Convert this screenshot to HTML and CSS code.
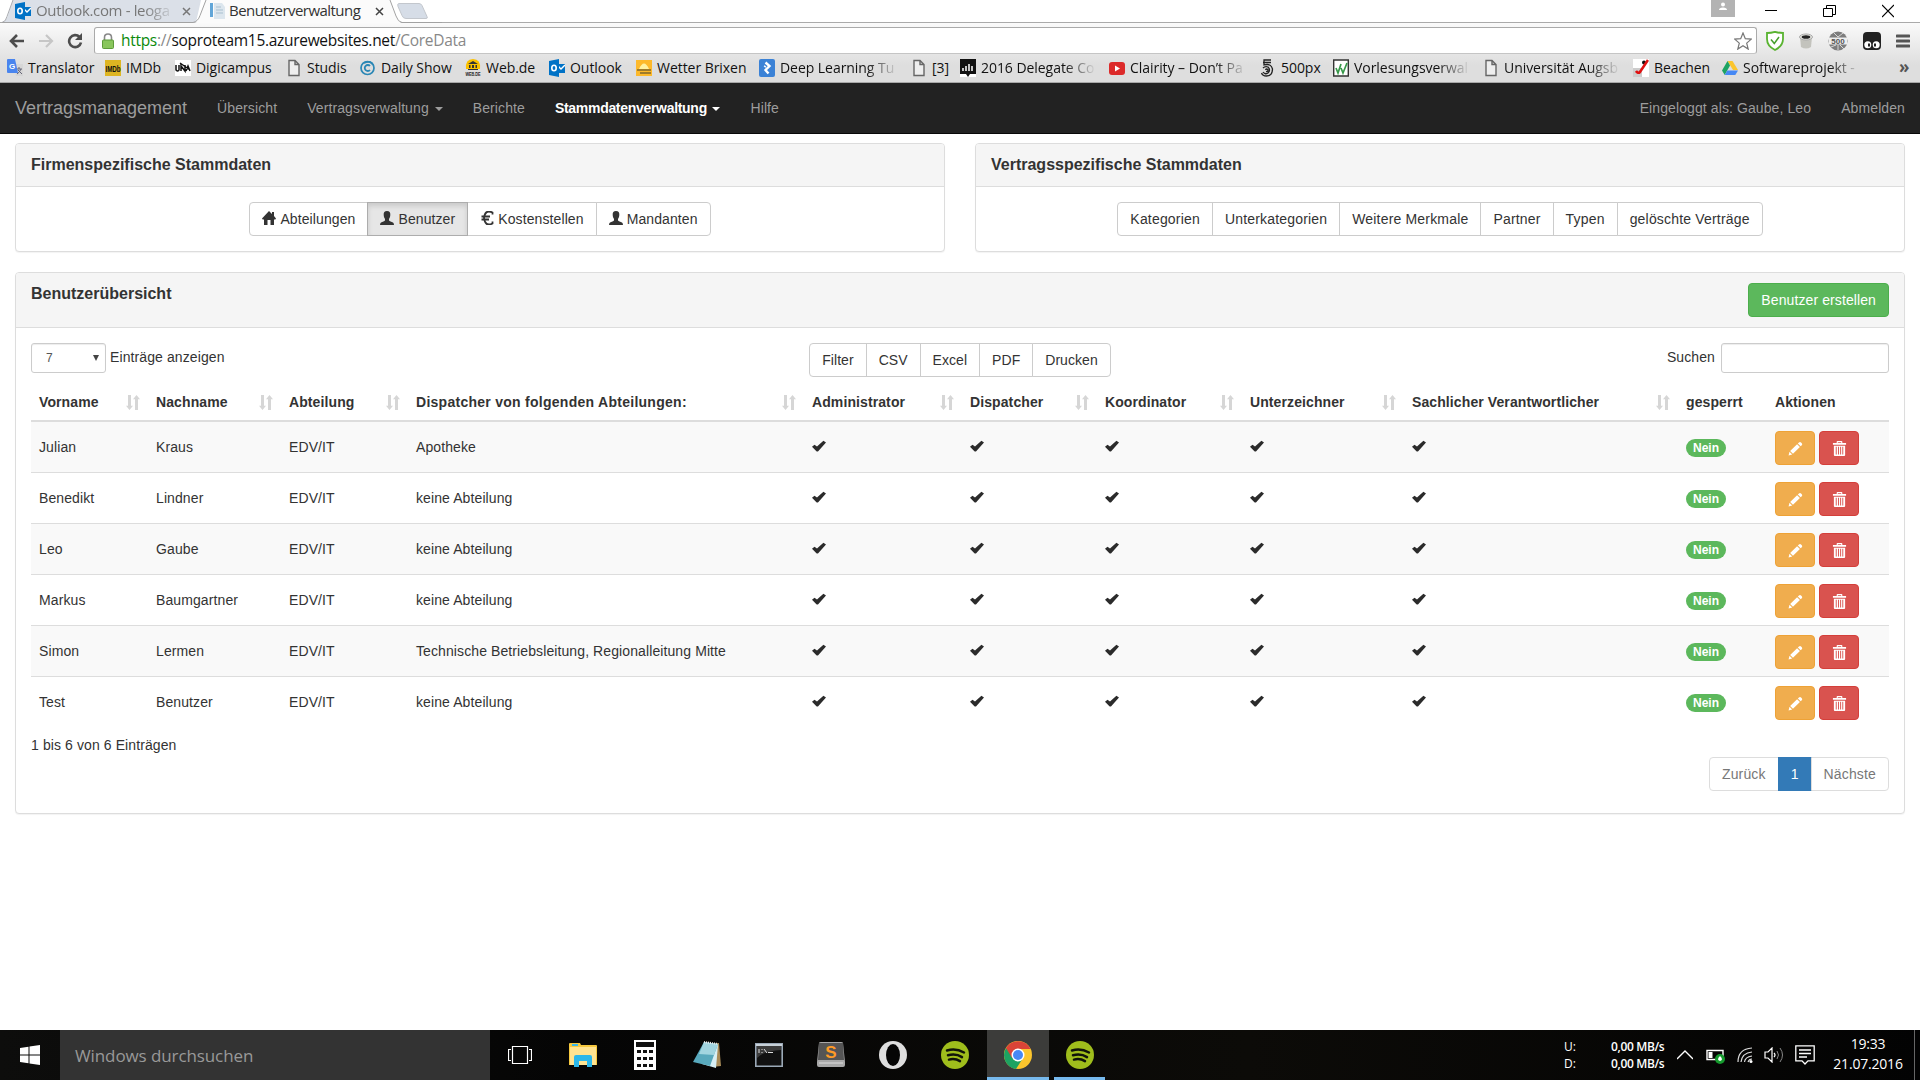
FILE: index.html
```html
<!DOCTYPE html>
<html lang="de">
<head>
<meta charset="utf-8">
<title>Benutzerverwaltung</title>
<link rel="stylesheet" href="styles.css">
</head>
<body>
<svg class="defs" width="0" height="0">
  <symbol id="check" viewBox="0 0 14 14" preserveAspectRatio="none"><path d="M0 7.800L2.500 5.600 5 7.700 11.400 0.900 14 2.900 6.200 13.200Q5.300 14 4.400 13Z"/></symbol>
  <symbol id="sort" viewBox="0 0 14 18" preserveAspectRatio="none"><path d="M2 0h3v13h2L3.500 18 0 13h2zM9 18h3V5h2L10.500 0 7 5h2z"/></symbol>
  <symbol id="pencil" viewBox="0 0 16 16"><path d="M11.700 1.500Q12.800.4 13.900 1.500L14.700 2.300Q15.700 3.300 14.700 4.400L13.500 5.500 10.500 2.600zM9.700 3.400L12.700 6.300 5.300 13.700 2.300 10.700zM1.600 11.500L4.500 14.400.6 15.500z"/></symbol>
  <symbol id="trash" viewBox="0 0 14 16"><path fill-rule="evenodd" d="M4 2V.8Q4 0 4.800 0h4.400Q10 0 10 .8V2h4v2H0V2zM5.200 2h3.600V1.200H5.200zM1 5h12v10q0 1-1 1H2q-1 0-1-1zM3 6v8.500h1V6zm2.400 0v8.500h1V6zm2.300 0v8.500h1V6zM10 6v8.500h1V6z"/></symbol>
  <symbol id="user" viewBox="0 0 14 14"><path d="M7 0C9.500 0 10.500 1.600 10.300 4 10.200 6 9.700 7 9 7.800V9.300Q9 9.900 10 10.300L13 11.500Q14 12 14 14H0Q0 12 1 11.500L4 10.300Q5 9.900 5 9.300V7.800C4.300 7 3.800 6 3.700 4 3.500 1.600 4.500 0 7 0z"/></symbol>
  <symbol id="home" viewBox="0 0 14 14"><path d="M7 0L10 3V1h2v4l2 2.600-.7.900H12V14H8.500V9h-3v5H2V8.500H.7L0 7.600z"/></symbol>
  <symbol id="page" viewBox="0 0 16 18"><path d="M3 1.500h6l4 4v11H3zM9 1.500v4h4" fill="#eee" stroke="#666" stroke-width="1.400"/></symbol>
  <symbol id="outlook" viewBox="0 0 16 18"><path d="M8 5h8v9H8z" fill="#0072c6"/><path d="M9 7l3 3 4-4" stroke="#fff" fill="none" stroke-width="1.400"/><path d="M0 2l10-2v18L0 16z" fill="#0072c6"/><ellipse cx="5" cy="9" rx="2.200" ry="2.800" fill="none" stroke="#fff" stroke-width="1.600"/></symbol>
  <symbol id="spotify" viewBox="0 0 28 28"><circle cx="14" cy="14" r="14" fill="#9fbd1c"/><path d="M6 9.500q9-2.500 17 2M7 14.300q8-2 14 1.800M8 18.600q6-1.500 11 1.500" fill="none" stroke="#10140a" stroke-width="2.500" stroke-linecap="round"/></symbol>
</svg>

<header class="browser">
  <div class="tabs">
    <svg class="tab-shapes" width="440" height="23" viewBox="0 0 440 23">
      <path d="M0 22.500q4-1 6-7L11 0h188l-5 22.500z" fill="#dbe0e8"/>
      <path d="M0 22.500q4-1 5-6L11 0" fill="none" stroke="#a9abb0"/>
      <path d="M193 23q4-2 5-7L204 0H388l6 16q2 6 6 7z" fill="#fbfbfb"/>
      <path d="M0 22.500H191q5-1 7-7L204 0M388 0l6 16q2 6 6 6.500h40" fill="none" stroke="#a2a2a2"/>
      <path d="M397 3.500h20q2 0 3 2l5 11q1 2-1 2h-20q-3 0-4-3l-4-9q-1-3 1-3z" fill="#d6dde7" stroke="#c3c7cd"/>
    </svg>
    <div class="tab tab-back"><svg class="fav"><use href="#outlook"/></svg><span class="tab-title fade">Outlook.com - leoga</span><svg class="tab-x" viewBox="0 0 9 9"><path d="M1 1l7 7M8 1L1 8"/></svg></div>
    <div class="tab tab-front"><svg class="fav" viewBox="0 0 16 18"><path d="M0 1h3v14H0z" fill="#62a6d8"/><path d="M4 1h8l3 4v12H4z" fill="#dce6ee"/><path d="M6 5h5M6 8h7M6 11h7" stroke="#a9c0d0"/></svg><span class="tab-title">Benutzerverwaltung</span><svg class="tab-x" viewBox="0 0 9 9"><path d="M1 1l7 7M8 1L1 8"/></svg></div>
    <div class="win">
      <svg width="24" height="17" viewBox="0 0 24 17"><path d="M0 0h24v17H0z" fill="#b3b3b3"/><circle cx="12" cy="4.500" r="2" fill="#fff"/><path d="M8 10q0-2.500 4-2.500t4 2.500z" fill="#fff"/></svg>
      <svg width="12" height="17" viewBox="0 0 12 17"><path d="M0 10.500h12" stroke="#000"/></svg>
      <svg width="13" height="18" viewBox="0 0 13 18"><path d="M.5 8.500h9v8h-9zM3.500 8V5.500h9v9H10" fill="none" stroke="#000"/></svg>
      <svg width="12" height="18" viewBox="0 0 12 18"><path d="M0 5l12 12M12 5L0 17" stroke="#000" stroke-width="1.200"/></svg>
    </div>
  </div>
  <div class="toolbar">
    <svg width="16" height="16" viewBox="0 0 16 16"><path d="M8 2L2 8l6 6M2 8h13" fill="none" stroke="#4d4d4d" stroke-width="2.600"/></svg>
    <svg width="16" height="16" viewBox="0 0 16 16"><path d="M8 2l6 6-6 6M14 8H1" fill="none" stroke="#c6c6c6" stroke-width="2.200"/></svg>
    <svg width="16" height="16" viewBox="0 0 16 16"><path d="M12.500 4A6 6 0 1 0 14 9.500" fill="none" stroke="#4d4d4d" stroke-width="2.600"/><path d="M15 0v7H8z" fill="#4d4d4d"/></svg>
    <div class="address">
      <svg width="12" height="16" viewBox="0 0 12 16"><path d="M2.500 8V4.500Q2.500 1 6 1t3.500 3.500V8" fill="none" stroke="#888" stroke-width="1.600"/><rect x=".5" y="7" width="11" height="8.500" rx="1" fill="#89c65c" stroke="#5d9b3a"/></svg>
      <span class="url"><i class="secure">https</i><i>://</i>soproteam15.azurewebsites.net<i>/CoreData</i></span>
      <svg width="18" height="18" viewBox="0 0 18 18"><path d="M9 1l2.300 5.700 6 .4-4.600 4 1.500 6L9 13.800 3.800 17.100l1.500-6-4.600-4 6-.4z" fill="#fff" stroke="#777" stroke-width="1.200"/></svg>
    </div>
    <div class="extensions">
      <svg width="18" height="20" viewBox="0 0 18 20"><path d="M1 2q4 0 8-1.200Q13 2 17 2v6q0 7-8 11Q1 15 1 8z" fill="#fff" stroke="#59b330" stroke-width="1.800"/><path d="M5 8.500l3.300 4L13 6" fill="none" stroke="#459f2c" stroke-width="1.500"/></svg>
      <svg width="14" height="16" viewBox="0 0 14 16"><path d="M1 4h12l-1 10q-5 3-10 0z" fill="#c3c3bd"/><ellipse cx="7" cy="4" rx="6.500" ry="3" fill="#e4e4df" stroke="#aaa"/><ellipse cx="7" cy="4" rx="4.300" ry="1.800" fill="#222"/></svg>
      <svg width="20" height="20" viewBox="0 0 20 20"><circle cx="10" cy="10" r="9.500" fill="#7d7d7d"/><path d="M5 1l5 5M15 2l-5 4M3 16l5-2M12 14l4 4M10 14v5" stroke="#d8d8d8" fill="none"/><path d="M1 6.500h18v7H1z" fill="#eee"/><text x="10" y="13" class="ext-label">500</text></svg>
      <svg width="18" height="18" viewBox="0 0 18 18"><rect width="18" height="18" rx="4" fill="#222"/><circle cx="4.800" cy="12.700" r="3.500" fill="#fff"/><circle cx="13.200" cy="12.700" r="3.500" fill="#fff"/><path d="M5 11.500h2v3H5zM11 11.500h2v3h-2z" fill="#222"/></svg>
      <svg width="14" height="14" viewBox="0 0 14 14"><path d="M1 2h12M1 7h12M1 12h12" stroke="#555" stroke-width="3" stroke-linecap="round"/></svg>
    </div>
  </div>
  <nav class="bookmarks">
    <a><svg class="fav" viewBox="0 0 16 18"><path d="M7 5h9v12H9z" fill="#d6d6d6"/><path d="M9 10h6M12 8v2M14 10q-1 3-4 5M11 11l4 4" stroke="#667" fill="none"/><path d="M0 1q0-1 1-1h7l3 14H1q-1 0-1-1z" fill="#4a85ee"/><text x="5" y="10" class="g-label">G</text></svg>Translator</a>
    <a><svg class="fav" viewBox="0 0 16 18"><path d="M0 1h16v16H0z" fill="#deb522"/><text x="8" y="13" class="imdb-label" textLength="15" lengthAdjust="spacingAndGlyphs">IMDb</text></svg>IMDb</a>
    <a><svg class="fav" viewBox="0 0 16 18"><path d="M0 1h16v16H0z" fill="#fff"/><path d="M1 6v5q2 2 3 0V6M6 12V7l4 5V6M11 12l2-5 2 5M5 4l10 7" fill="none" stroke="#111" stroke-width="1.500"/></svg>Digicampus</a>
    <a><svg class="fav"><use href="#page"/></svg>Studis</a>
    <a><svg class="fav" viewBox="0 0 16 18"><circle cx="7.500" cy="9" r="6.500" fill="none" stroke="#2b87b5" stroke-width="1.700"/><path d="M10 7a3 3 0 1 0 0 4M4 4Q11 1 13 6" fill="none" stroke="#2b87b5" stroke-width="1.800"/></svg>Daily Show</a>
    <a><svg class="fav" viewBox="0 0 16 18"><path d="M1 10Q0 0 8 0t7 10z" fill="#fcc100"/><path d="M3 5l5-3 5 3zM4 6h1.500v3H4zM7 6h2v3H7zM10.500 6H12v3h-1.500zM3 10h10v1H3z" fill="#333"/><text x="8" y="17" class="web-label" textLength="15" lengthAdjust="spacingAndGlyphs">WEB.DE</text></svg>Web.de</a>
    <a><svg class="fav"><use href="#outlook"/></svg>Outlook</a>
    <a><svg class="fav" viewBox="0 0 16 18"><path d="M0 1h16v16H0z" fill="#fdb92b"/><path d="M3 10q5-11 10 0z" fill="#fff1a0"/><path d="M1 11h14M4 14h11" stroke="#80672c" stroke-width="1.500"/></svg>Wetter Brixen</a>
    <a class="fade"><svg class="fav" viewBox="0 0 16 18"><rect width="16" height="18" rx="2" fill="#3b82d6"/><path d="M6.500 3.500l4 3.500-4 4 3 3.500M6.500 7l-1 1" fill="none" stroke="#fff" stroke-width="2.400"/></svg>Deep Learning Tu</a>
    <a><svg class="fav"><use href="#page"/></svg>[3]</a>
    <a class="fade"><svg class="fav" viewBox="0 0 16 18"><path d="M0 0h16v18H0z" fill="#fff"/><path d="M0 0h16v15h-6l-2 3-2-3H0z" fill="#111"/><path d="M3 12V9M6 12V7M9 12V5M12 12V7" stroke="#fff" stroke-width="1.500"/></svg>2016 Delegate Co</a>
    <a class="fade"><svg class="fav" viewBox="0 0 16 18"><rect y="3" width="16" height="13" rx="3" fill="#dc2a2a"/><path d="M6 6.500l5 3-5 3z" fill="#fff"/></svg>Clairity – Don’t Pa</a>
    <a><svg class="fav" viewBox="0 0 16 18"><path d="M11 1H4v5q7-2 8.500 4 0 7-6 7-4 0-5-3M3 3.500h8M3 13q2 3 5 1 3-3 0-6-3-1-5 1M5.500 11q1-2 2.500 0 0 2-2 1.500" fill="none" stroke="#222" stroke-width="1.300"/></svg>500px</a>
    <a class="fade"><svg class="fav" viewBox="0 0 16 18"><path d="M.7 1h14.600v16H.7z" fill="#fff" stroke="#333" stroke-width="1.400"/><path d="M3 9l2 5 3-9M8 9l2 5 4-10" fill="none" stroke="#38994a" stroke-width="1.700"/></svg>Vorlesungsverwal</a>
    <a class="fade"><svg class="fav"><use href="#page"/></svg>Universität Augsb</a>
    <a><svg class="fav" viewBox="0 0 16 18"><path d="M0 0h16v18H0z" fill="#fff"/><path d="M0 9h9v9H0z" fill="#ccc"/><circle cx="11" cy="3.500" r="2" fill="#111"/><path d="M15 1L7 13q-2 2-4-1" fill="none" stroke="#e01010" stroke-width="2.600"/></svg>Beachen</a>
    <a class="fade"><svg class="fav" viewBox="0 0 16 18"><path d="M5.500 2h5L16 11h-5z" fill="#fbc52d"/><path d="M5.500 2L8 6.500 2.700 16 0 11.500z" fill="#1da362"/><path d="M5.300 11.500H16L13.300 16H2.700z" fill="#4688f4"/></svg>Softwareprojekt -</a>
    <b>»</b>
  </nav>
</header>

<nav class="navbar">
  <a class="brand">Vertragsmanagement</a>
  <a>Übersicht</a>
  <a>Vertragsverwaltung <span class="caret"></span></a>
  <a>Berichte</a>
  <a class="current">Stammdatenverwaltung <span class="caret"></span></a>
  <a>Hilfe</a>
  <a class="login">Eingeloggt als: Gaube, Leo</a>
  <a>Abmelden</a>
</nav>

<main class="content">
  <div class="panel-row">
    <section class="panel">
      <h3 class="panel-heading">Firmenspezifische Stammdaten</h3>
      <div class="panel-body centered">
        <div class="btn-group">
          <a class="btn"><svg class="glyph"><use href="#home"/></svg>Abteilungen</a><a class="btn pressed"><svg class="glyph"><use href="#user"/></svg>Benutzer</a><a class="btn"><svg class="glyph" viewBox="0 0 14 14"><path d="M12.500 3.500V1.500Q5 -2 4 7q1 9 8.500 5.500V10.500M1.500 5.500H10M1.500 8.500H9" fill="none" stroke="#333" stroke-width="1.800"/></svg>Kostenstellen</a><a class="btn"><svg class="glyph"><use href="#user"/></svg>Mandanten</a>
        </div>
      </div>
    </section>
    <section class="panel">
      <h3 class="panel-heading">Vertragsspezifische Stammdaten</h3>
      <div class="panel-body centered">
        <div class="btn-group wide"><a class="btn">Kategorien</a><a class="btn">Unterkategorien</a><a class="btn">Weitere Merkmale</a><a class="btn">Partner</a><a class="btn">Typen</a><a class="btn">gelöschte Verträge</a></div>
      </div>
    </section>
  </div>

  <section class="panel overview">
    <div class="panel-heading with-action"><h3>Benutzerübersicht</h3><a class="btn success">Benutzer erstellen</a></div>
    <div class="panel-body">
      <div class="controls">
        <div class="length"><span class="select">7<span class="arrow"></span></span>Einträge anzeigen</div>
        <div class="btn-group"><a class="btn">Filter</a><a class="btn">CSV</a><a class="btn">Excel</a><a class="btn">PDF</a><a class="btn">Drucken</a></div>
        <label class="search">Suchen<input type="text"></label>
      </div>
      <table class="users">
        <colgroup><col class="c1"><col class="c2"><col class="c3"><col class="c4"><col class="c5"><col class="c6"><col class="c7"><col class="c8"><col class="c9"><col class="c10"><col class="c11"></colgroup>
        <thead><tr>
          <th><div>Vorname<svg><use href="#sort"/></svg></div></th>
          <th><div>Nachname<svg><use href="#sort"/></svg></div></th>
          <th><div>Abteilung<svg><use href="#sort"/></svg></div></th>
          <th class="departments"><div>Dispatcher von folgenden Abteilungen:<svg><use href="#sort"/></svg></div></th>
          <th><div>Administrator<svg><use href="#sort"/></svg></div></th>
          <th><div>Dispatcher<svg><use href="#sort"/></svg></div></th>
          <th><div>Koordinator<svg><use href="#sort"/></svg></div></th>
          <th><div>Unterzeichner<svg><use href="#sort"/></svg></div></th>
          <th><div>Sachlicher Verantwortlicher<svg><use href="#sort"/></svg></div></th>
          <th>gesperrt</th>
          <th>Aktionen</th>
        </tr></thead>
        <tbody>
          <tr><td>Julian</td><td>Kraus</td><td>EDV/IT</td><td>Apotheke</td><td><svg class="tick"><use href="#check"/></svg></td><td><svg class="tick"><use href="#check"/></svg></td><td><svg class="tick"><use href="#check"/></svg></td><td><svg class="tick"><use href="#check"/></svg></td><td><svg class="tick"><use href="#check"/></svg></td><td><span class="badge">Nein</span></td><td><div class="actions"><a class="btn warning"><svg><use href="#pencil"/></svg></a><a class="btn danger"><svg><use href="#trash"/></svg></a></div></td></tr>
          <tr><td>Benedikt</td><td>Lindner</td><td>EDV/IT</td><td>keine Abteilung</td><td><svg class="tick"><use href="#check"/></svg></td><td><svg class="tick"><use href="#check"/></svg></td><td><svg class="tick"><use href="#check"/></svg></td><td><svg class="tick"><use href="#check"/></svg></td><td><svg class="tick"><use href="#check"/></svg></td><td><span class="badge">Nein</span></td><td><div class="actions"><a class="btn warning"><svg><use href="#pencil"/></svg></a><a class="btn danger"><svg><use href="#trash"/></svg></a></div></td></tr>
          <tr><td>Leo</td><td>Gaube</td><td>EDV/IT</td><td>keine Abteilung</td><td><svg class="tick"><use href="#check"/></svg></td><td><svg class="tick"><use href="#check"/></svg></td><td><svg class="tick"><use href="#check"/></svg></td><td><svg class="tick"><use href="#check"/></svg></td><td><svg class="tick"><use href="#check"/></svg></td><td><span class="badge">Nein</span></td><td><div class="actions"><a class="btn warning"><svg><use href="#pencil"/></svg></a><a class="btn danger"><svg><use href="#trash"/></svg></a></div></td></tr>
          <tr><td>Markus</td><td>Baumgartner</td><td>EDV/IT</td><td>keine Abteilung</td><td><svg class="tick"><use href="#check"/></svg></td><td><svg class="tick"><use href="#check"/></svg></td><td><svg class="tick"><use href="#check"/></svg></td><td><svg class="tick"><use href="#check"/></svg></td><td><svg class="tick"><use href="#check"/></svg></td><td><span class="badge">Nein</span></td><td><div class="actions"><a class="btn warning"><svg><use href="#pencil"/></svg></a><a class="btn danger"><svg><use href="#trash"/></svg></a></div></td></tr>
          <tr><td>Simon</td><td>Lermen</td><td>EDV/IT</td><td>Technische Betriebsleitung, Regionalleitung Mitte</td><td><svg class="tick"><use href="#check"/></svg></td><td><svg class="tick"><use href="#check"/></svg></td><td><svg class="tick"><use href="#check"/></svg></td><td><svg class="tick"><use href="#check"/></svg></td><td><svg class="tick"><use href="#check"/></svg></td><td><span class="badge">Nein</span></td><td><div class="actions"><a class="btn warning"><svg><use href="#pencil"/></svg></a><a class="btn danger"><svg><use href="#trash"/></svg></a></div></td></tr>
          <tr><td>Test</td><td>Benutzer</td><td>EDV/IT</td><td>keine Abteilung</td><td><svg class="tick"><use href="#check"/></svg></td><td><svg class="tick"><use href="#check"/></svg></td><td><svg class="tick"><use href="#check"/></svg></td><td><svg class="tick"><use href="#check"/></svg></td><td><svg class="tick"><use href="#check"/></svg></td><td><span class="badge">Nein</span></td><td><div class="actions"><a class="btn warning"><svg><use href="#pencil"/></svg></a><a class="btn danger"><svg><use href="#trash"/></svg></a></div></td></tr>
        </tbody>
      </table>
      <p class="info">1 bis 6 von 6 Einträgen</p>
      <div class="pagination"><a>Zurück</a><a class="active">1</a><a>Nächste</a></div>
    </div>
  </section>
</main>

<footer class="taskbar">
  <div class="start"><svg width="20" height="20" viewBox="0 0 20 20"><path d="M0 3l8.500-1.300v7.800H0zM9.500 1.500L20 0v9.500H9.500zM0 10.500h8.500v7.800L0 17zM9.500 10.500H20V20L9.500 18.500z" fill="#fff"/></svg></div>
  <div class="task-search">Windows durchsuchen</div>
  <div class="apps">
    <span><svg width="24" height="18" viewBox="0 0 24 18"><path d="M4.500.5h15v17h-15zM3 3.500H.5v11H3M21 3.500h2.500v11H21" fill="none" stroke="#fff" stroke-width="1.200"/></svg></span>
    <span><svg width="28" height="24" viewBox="0 0 28 24"><path d="M0 1q0-1 1-1h10l1 2h15q1 0 1 1v19H0z" fill="#f5c83f"/><path d="M1 4h26v18H1z" fill="#ffe391"/><path d="M3 1h6v2H3z" fill="#3bb5e6"/><path d="M5 24V14q0-2 2-2h14q2 0 2 2v10h-5v-6h-8v6z" fill="#2bb7ea"/></svg></span>
    <span><svg width="22" height="30" viewBox="0 0 22 30"><path d="M0 0h22v30H0z" fill="#fff"/><path d="M2 2h18v5H2zM3 10h4v3H3zM9 10h4v3H9zM15 10h4v3h-4zM3 17h4v3H3zM9 17h4v3H9zM15 17h4v3h-4zM3 24h4v3H3zM9 24h4v3H9zM15 24h4v3h-4z" fill="#111"/></svg></span>
    <span><svg width="28" height="28" viewBox="0 0 28 28"><path d="M17 3l9-1 2 23-9 1z" fill="#a88b58"/><path d="M12 2l13 2-2 23-14-4z" fill="#d7eff5"/><path d="M11 1l14 2-8 22L0 21z" fill="#58a9bd"/><path d="M11 1l14 2-4 11-15-1z" fill="#a1d5e0"/><path d="M11 1l14 2" stroke="#eee" stroke-width="2" stroke-dasharray="1 1"/></svg></span>
    <span><svg width="28" height="24" viewBox="0 0 28 24"><path d="M.8.8h26.400v22.400H.8z" fill="#111" stroke="#9ba9b7" stroke-width="1.600"/><path d="M2 2h24v5Q8 8 2 15z" fill="#3b3b3b"/><path d="M1 2h26" stroke="#c7d0d8" stroke-width="2"/><path d="M4 6v4M7 6v1M7 9v1M9 6l3 4M13 9.500h5" stroke="#ddd"/></svg></span>
    <span><svg width="28" height="25" viewBox="0 0 28 25"><path d="M2 1q0-1 2-1h20q2 0 2 1l2 19v3q0 2-2 2H2q-2 0-2-2v-3z" fill="#a8a8a8"/><path d="M2 1h24l1 17H1z" fill="#555"/><path d="M2 21h24" stroke="#ddd"/><text x="14" y="16" class="sublime-label">S</text></svg></span>
    <span><svg width="28" height="28" viewBox="0 0 28 28"><ellipse cx="14" cy="14" rx="14" ry="14" fill="#dedede"/><ellipse cx="14" cy="14" rx="7" ry="11" fill="#050505"/></svg></span>
    <span><svg width="28" height="28"><use href="#spotify"/></svg></span>
    <span class="focused"><svg width="28" height="28" viewBox="0 0 28 28"><circle cx="14" cy="14" r="14" fill="#fbc52d"/><path d="M14 14L2 7a14 14 0 0 0 10 21l7-11z" fill="#1da362"/><path d="M2 7a14 14 0 0 1 24.500 1H14L8 17z" fill="#db4437"/><circle cx="14" cy="14" r="6.500" fill="#fff"/><circle cx="14" cy="14" r="5" fill="#4688f4"/></svg></span>
    <span class="running"><svg width="28" height="28"><use href="#spotify"/></svg></span>
  </div>
  <div class="tray">
    <div class="net"><span>U:</span><b>0,00 MB/s</b><span>D:</span><b>0,00 MB/s</b></div>
    <svg class="chevron" width="16" height="10" viewBox="0 0 16 10"><path d="M0 9l8-8 8 8" fill="none" stroke="#fff" stroke-width="1.300"/></svg>
    <svg width="20" height="18" viewBox="0 0 20 18"><path d="M1 4.500h16v9H1z" fill="none" stroke="#fff" stroke-width="1.400"/><path d="M2.500 6h4v6h-4z" fill="#fff"/><circle cx="14" cy="13" r="5" fill="#159a2d"/><path d="M14 10q-4 4 0 5 4-1 0-5z" fill="#fff"/></svg>
    <svg width="16" height="16" viewBox="0 0 16 16"><path d="M1 15Q1 2 15 1M4 15Q5 6 15 5M7.500 15Q8 10 15 9M11 15q1-3 4-3" fill="none" stroke="#ddd" stroke-width="1.200"/><circle cx="14" cy="14.500" r="1.500" fill="#fff"/></svg>
    <svg width="20" height="16" viewBox="0 0 20 16"><path d="M1 5h3l4-4v14l-4-4H1zM10 6q2 2 0 4" fill="none" stroke="#fff" stroke-width="1.200"/><path d="M13 4q3 4 0 8M16 1q5 7 0 14" fill="none" stroke="#888"/></svg>
    <svg width="20" height="20" viewBox="0 0 20 20"><path d="M.8.800h18.400v15H13L10 19l-3-3.200H.8zM4 5h12M4 8.500h12M4 12h8" fill="none" stroke="#fff" stroke-width="1.300"/></svg>
    <div class="clock">19:33<br>21.07.2016</div>
    <i class="peek"></i>
  </div>
</footer>
</body>
</html>
```
FILE: styles.css
```css
* { box-sizing: border-box; }
body {
  margin: 0;
  height: 1080px;
  overflow: hidden;
  display: flex;
  flex-direction: column;
  background: #fff;
  color: #333;
  font: 14px/20px "Liberation Sans", Arial, sans-serif;
  letter-spacing: 0.1px;
}
h3, p { margin: 0; }
svg { flex: none; display: block; }
.defs { position: absolute; }

/* browser window */
.browser { height: 83px; flex: none; font-family: "Open Sans", "Noto Sans", sans-serif; color: #111; border-bottom: 1px solid #a8a8a8; background: linear-gradient(#fff 22px, #fafafa 23px, #dedede 65px); }
.tabs { height: 23px; display: flex; position: relative; border-bottom: 1px solid #aaa; background: #fff; }
.tab-shapes { position: absolute; left: 2px; top: 0; }
.tab { position: relative; display: flex; align-items: center; height: 22px; font-size: 15px; letter-spacing: -0.55px; white-space: nowrap; }
.tab-back { width: 200px; padding-left: 15px; color: #777; letter-spacing: -0.35px; }
.tab-front { width: 200px; padding-left: 10px; color: #333; }
.tab-title { width: 140px; margin-left: 5px; margin-top: -2px; }
.tab-front .tab-title { width: 146px; margin-left: 3px; }
.tab-x { width: 9px; height: 9px; margin-left: 6px; stroke: #777; stroke-width: 1.500; }
.tab-front .tab-x { margin-left: 0; stroke: #444; }
.fav { width: 16px; height: 18px; flex: none; }
.fade { -webkit-mask-image: linear-gradient(90deg, #000 calc(100% - 32px), transparent); mask-image: linear-gradient(90deg, #000 calc(100% - 32px), transparent); }
.win { margin-left: auto; display: flex; padding-right: 26px; }
.win svg:nth-child(2) { margin-left: 30px; }
.win svg:nth-child(3) { margin-left: 46px; }
.win svg:nth-child(4) { margin-left: 46px; }
.toolbar { height: 35px; display: flex; align-items: center; padding: 0 10px 0 9px; gap: 13px; }
.address { flex: none; margin-left: -2px; width: 1663px; height: 27px; display: flex; align-items: center; padding: 0 4px 0 7px; border: 1px solid #aaa; border-bottom-color: #c5c5c5; border-radius: 3px; background: #fff; }
.url { flex: 1; padding-left: 7px; margin-top: -2px; font-size: 15.500px; letter-spacing: -0.3px; }
.url i { font-style: normal; color: #888; }
.url .secure { color: #0b8a0b; }
.extensions { flex: 1; display: flex; align-items: center; justify-content: space-between; margin-left: -4px; }
.ext-label { font: bold 8px "Liberation Sans", sans-serif; text-anchor: middle; fill: #555; }
.g-label { font: bold 8px "Liberation Sans", sans-serif; text-anchor: middle; fill: #fff; }
.imdb-label { font: bold 9px "Liberation Sans", sans-serif; text-anchor: middle; fill: #111; }
.web-label { font: bold 5px "Liberation Sans", sans-serif; text-anchor: middle; fill: #222; }
.sublime-label { font: bold 17px "Liberation Sans", sans-serif; text-anchor: middle; fill: #ff9b27; }
.bookmarks {
  height: 20px;
  display: grid;
  padding-left: 7px;
  grid-template-columns: 98px 70px 111px 74px 105px 84px 87px 123px 152px 49px 149px 151px 73px 150px 150px 89px 177px 1fr;
  font-size: 14px;
  letter-spacing: -0.05px;
}
.bookmarks a { display: flex; align-items: center; gap: 5px; white-space: nowrap; }
.bookmarks a.fade { margin-right: 13px; }
.bookmarks a:nth-child(17) { margin-right: 38px; }
.bookmarks b { color: #555; font-size: 17px; line-height: 18px; }

/* application navigation */
.navbar { height: 51px; flex: none; display: flex; background: #222; border-bottom: 1px solid #080808; }
.navbar a { padding: 15px; color: #9d9d9d; }
.navbar .brand { font-size: 18px; letter-spacing: 0; }
.navbar .current { color: #fff; font-weight: bold; letter-spacing: -0.3px; }
.navbar .login { margin-left: auto; }
.caret { display: inline-block; margin-left: 2px; vertical-align: middle; border-top: 4px solid; border-left: 4px solid transparent; border-right: 4px solid transparent; }

/* panels */
.content { flex: 1; padding: 9px 15px 0; }
.panel-row { display: grid; grid-template-columns: 1fr 1fr; gap: 30px; margin-bottom: 20px; }
.panel { border: 1px solid #ddd; border-radius: 4px; background: #fff; box-shadow: 0 1px 1px rgba(0, 0, 0, .05); }
.panel-heading { height: 43px; padding: 10px 15px; border-bottom: 1px solid #ddd; border-radius: 3px 3px 0 0; background: #f5f5f5; }
h3 { font-size: 16px; font-weight: bold; line-height: 22px; letter-spacing: 0; }
.with-action { height: 55px; display: flex; justify-content: space-between; }
.panel-body { padding: 15px; }
.centered { display: flex; justify-content: center; }
.overview { height: 542px; }

.btn { display: inline-flex; align-items: center; gap: 4px; height: 34px; padding: 0 12px; border: 1px solid #ccc; border-radius: 4px; background: #fff; color: #333; white-space: nowrap; }
.btn-group { display: flex; }
.btn-group.wide { letter-spacing: 0.18px; }
.btn-group .btn { border-radius: 0; }
.btn-group .btn + .btn { margin-left: -1px; }
.btn-group .btn:first-child { border-radius: 4px 0 0 4px; }
.btn-group .btn:last-child { border-radius: 0 4px 4px 0; }
.btn.pressed { z-index: 1; background: #e6e6e6; border-color: #adadad; box-shadow: inset 0 3px 5px rgba(0, 0, 0, .125); }
.glyph { width: 14px; height: 14px; fill: #333; margin-top: -2px; }
.btn.success { background: #5cb85c; border-color: #4cae4c; color: #fff; }
.btn.warning { background: #f0ad4e; border-color: #eea236; }
.btn.danger { background: #d9534f; border-color: #d43f3a; }

/* table controls */
.controls { display: grid; grid-template-columns: 1fr auto 1fr; align-items: start; height: 43px; }
.controls .btn-group { letter-spacing: 0.05px; }
.length { display: flex; line-height: 28px; gap: 4px; }
.select { display: flex; align-items: center; justify-content: space-between; width: 75px; height: 30px; padding: 0 6px 0 14px; border: 1px solid #ccc; border-radius: 3px; font-size: 12px; color: #555; box-shadow: inset 0 1px 1px rgba(0, 0, 0, .075); }
.arrow { border-top: 6px solid #444; border-left: 3px solid transparent; border-right: 3px solid transparent; }
.search { display: flex; justify-content: flex-end; gap: 6px; line-height: 28px; }
.search input { width: 168px; height: 30px; border: 1px solid #ccc; border-radius: 3px; box-shadow: inset 0 1px 1px rgba(0, 0, 0, .075); }

/* user table */
.users { width: 1858px; table-layout: fixed; border-collapse: separate; border-spacing: 0; }
.c1 { width: 117px; } .c2 { width: 133px; } .c3 { width: 127px; } .c4 { width: 396px; }
.c5 { width: 158px; } .c6 { width: 135px; } .c7 { width: 145px; } .c8 { width: 162px; }
.c9 { width: 274px; } .c10 { width: 89px; } .c11 { width: 122px; }
th { height: 36px; padding: 0 8px 2px; text-align: left; border-bottom: 2px solid #ddd; }
th div { display: flex; align-items: center; justify-content: space-between; white-space: nowrap; }
th svg { width: 14px; height: 15px; fill: #d6d6d6; }
.departments { letter-spacing: 0.27px; }
td { height: 51px; padding: 7px 8px 8px; border-top: 1px solid #ddd; vertical-align: middle; }
tbody tr:first-child td { height: 50px; border-top: 0; }
tbody tr:nth-child(odd) td { background: #f9f9f9; }
.tick { width: 14px; height: 12px; fill: #2b2b2b; margin-top: -1px; }
.badge { display: block; width: 40px; height: 18px; margin-top: 3px; border-radius: 10px; background: #5cb85c; color: #fff; font-size: 12px; font-weight: bold; line-height: 18px; text-align: center; letter-spacing: 0; }
td:last-child { padding-top: 8px; padding-bottom: 7px; }
.actions { display: flex; gap: 4px; padding-top: 1px; }
.actions .btn { width: 40px; justify-content: center; padding: 0; }
.actions svg { width: 15px; height: 15px; fill: #fff; }
.info { margin-top: 8px; }
.pagination { display: flex; justify-content: flex-end; margin-top: 2px; letter-spacing: 0.15px; }
.pagination a { height: 34px; padding: 6px 12px; border: 1px solid #ddd; color: #777; margin-left: -1px; }
.pagination a:first-child { border-radius: 4px 0 0 4px; }
.pagination a:last-child { border-radius: 0 4px 4px 0; }
.pagination .active { background: #337ab7; border-color: #337ab7; color: #fff; }

/* desktop taskbar */
.taskbar { height: 50px; flex: none; display: flex; background: linear-gradient(90deg, #0d0d0c, #050505 30%, #0c0b08 65%, #030303); color: #fff; font-family: "Open Sans", "Noto Sans", sans-serif; }
.start { width: 60px; display: flex; align-items: center; justify-content: center; }
.task-search { width: 430px; padding-left: 15px; background: #333; color: #999; font-size: 17px; letter-spacing: -0.1px; line-height: 51px; }
.apps { display: flex; }
.apps span { width: 62px; display: flex; align-items: center; justify-content: center; border-bottom: 3px solid transparent; padding-top: 2px; }
.apps span:first-child { width: 60px; }
.apps span:nth-child(2) { width: 64px; padding-left: 2px; }
.apps .focused { background: #3c3c3a; border-color: #76b9ed; margin-left: 1px; }
.apps .running { width: 51px; margin-left: 5px; border-color: #76b9ed; }
.tray { margin-left: auto; display: flex; align-items: center; }
.net { display: grid; grid-template-columns: 47px 60px; font-size: 12px; line-height: 17px; margin-right: 6px; }
.net b { font-weight: 600; letter-spacing: -0.35px; white-space: nowrap; }
.chevron { margin-right: 13px; }
.tray svg + svg { margin-right: 11px; }
.clock { width: 90px; margin: -2px 0 0 -3px; text-align: center; font-size: 14px; letter-spacing: -0.2px; line-height: 20px; }
.peek { width: 6px; height: 50px; border-left: 1px solid #666; margin-left: 1px; }
```
